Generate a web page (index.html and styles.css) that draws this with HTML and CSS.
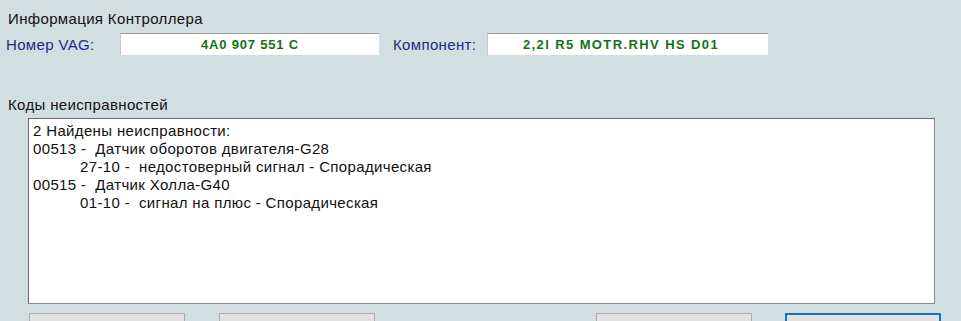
FILE: index.html
```html
<!DOCTYPE html>
<html lang="ru">

<head>
    <meta charset="UTF-8">
    <title>Информация Контроллера</title>
    <link rel="stylesheet" href="styles.css">
</head>

<body>
    <div class="window">
        <div class="group-title">Информация Контроллера</div>
        <div class="info-row">
            <span class="field-label">Номер VAG:</span>
            <div class="field-value vag">4A0 907 551 C</div>
            <span class="field-label comp-label">Компонент:</span>
            <div class="field-value comp">2,2l R5 MOTR.RHV HS D01</div>
        </div>

        <div class="group-title faults-title">Коды неисправностей</div>
        <div class="faults-box">
            <div class="line">2 Найдены неисправности:</div>
            <div class="line">00513 -  Датчик оборотов двигателя-G28</div>
            <div class="line sub">27-10 -  недостоверный сигнал - Спорадическая</div>
            <div class="line">00515 -  Датчик Холла-G40</div>
            <div class="line sub">01-10 -  сигнал на плюс - Спорадическая</div>
        </div>

        <div class="buttons">
            <div class="btn-group">
                <button class="btn"></button>
                <button class="btn"></button>
            </div>
            <div class="btn-group right">
                <button class="btn"></button>
                <button class="btn focused"></button>
            </div>
        </div>
    </div>
</body>

</html>
```

FILE: styles.css
```css
body {
    margin: 0;
    background-color: #d1dfe0;
    font-family: "Liberation Sans", Arial, sans-serif;
    font-size: 15px;
    letter-spacing: 0.35px;
    color: #111;
    overflow: hidden;
}

.window {
    padding: 10px 0 0 0;
}

.group-title {
    padding-left: 8px;
    line-height: 17px;
}

.info-row {
    display: flex;
    align-items: center;
    height: 22px;
    margin-top: 6px;
}

.field-label {
    color: #1c2a8a;
    padding-left: 6px;
    width: 114px;
}

.comp-label {
    padding-left: 14px;
    width: 94px;
}

.field-value {
    height: 21px;
    line-height: 21px;
    background: #fff;
    border-top: 1px solid #9a9a9a;
    border-left: 1px solid #c8c8c8;
    color: #137313;
    font-weight: bold;
    font-size: 13px;
    text-align: center;
}

.vag {
    width: 258px;
    letter-spacing: 0.8px;
}

.comp {
    width: 266px;
    padding-right: 14px;
    letter-spacing: 1.4px;
}

.faults-title {
    margin-top: 41px;
}

.faults-box {
    margin: 5px 0 0 28px;
    width: 897px;
    height: 178px;
    padding: 3px 4px;
    background: #fff;
    border: 1px solid #8a8a8a;
    border-top-color: #6a6a6a;
    border-left-color: #6a6a6a;
}

.line {
    line-height: 18px;
    white-space: pre;
}

.line.sub {
    padding-left: 47px;
}

.buttons {
    display: flex;
    justify-content: space-between;
    width: 912px;
    margin: 9px 0 0 29px;
}

.btn-group {
    display: flex;
    gap: 34px;
}

.btn-group.right {
    gap: 33px;
}

.btn {
    width: 156px;
    height: 24px;
    background: #e1e1e1;
    border: 1px solid #adadad;
    padding: 0;
}

.btn.focused {
    border: 2px solid #1e6fc0;
}
```
